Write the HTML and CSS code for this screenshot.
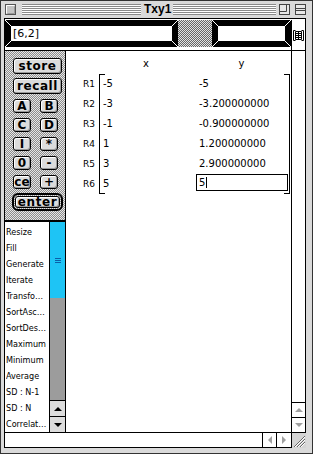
FILE: index.html
```html
<!DOCTYPE html>
<html lang="en">

<head>
  <meta charset="UTF-8">
  <title>Txy1</title>
  <link rel="stylesheet" href="styles.css">
</head>

<body>
  <div class="window">
    <div class="titlebar">
      <svg class="tbox" width="11" height="11" viewBox="0 0 11 11">
        <rect x="0.5" y="0.5" width="10" height="10" fill="#c4c4c4" stroke="#555" />
        <path d="M1.5 9.5V1.5H9.5" fill="none" stroke="#fff" />
        <path d="M2.5 9.5H9.5V2.5" fill="none" stroke="#999" />
      </svg>
      <span class="stripes left"></span>
      <span class="title">Txy1</span>
      <span class="stripes"></span>
      <svg class="tbox zoom" width="11" height="11" viewBox="0 0 11 11">
        <rect x="0.5" y="0.5" width="10" height="10" fill="#e8e8e8" stroke="#444" />
        <path d="M0.5 7.5H7.5V0.5" fill="none" stroke="#444" />
      </svg>
      <svg class="tbox" width="11" height="11" viewBox="0 0 11 11">
        <rect x="0.5" y="0.5" width="10" height="10" fill="#e8e8e8" stroke="#444" />
        <path d="M0.5 4.5H10.5M0.5 6.5H10.5" fill="none" stroke="#444" />
      </svg>
    </div>

    <div class="content">
      <div class="entry">
        <div class="field wide">
          <div class="well">[6,2]</div>
        </div>
        <div class="dots"></div>
        <div class="field short">
          <div class="well"></div>
        </div>
        <div class="icon-cell">
          <svg width="11" height="11" viewBox="0 0 11 11">
            <path d="M2.5 0.5H0.5V10.5H2.5M8.5 0.5H10.5V10.5H8.5" fill="none" stroke="#000" />
            <path d="M2.5 1.5H8.5V9.5H2.5ZM2.5 3.5H8.5M2.5 5.5H8.5M2.5 7.5H8.5M5.5 1.5V9.5" fill="none" stroke="#000" />
          </svg>
        </div>
      </div>

      <div class="middle">
        <div class="side">
          <div class="keys">
            <button class="key long">store</button>
            <button class="key long recall">recall</button>
            <div class="pair first">
              <button class="key">A</button>
              <button class="key">B</button>
            </div>
            <div class="pair">
              <button class="key">C</button>
              <button class="key">D</button>
            </div>
            <div class="pair">
              <button class="key">I</button>
              <button class="key">*</button>
            </div>
            <div class="pair">
              <button class="key">0</button>
              <button class="key">-</button>
            </div>
            <div class="pair">
              <button class="key">ce</button>
              <button class="key">+</button>
            </div>
            <div class="enter-ring">
              <button class="key long">enter</button>
            </div>
          </div>

          <div class="list">
            <ul class="items">
              <li>Resize</li>
              <li>Fill</li>
              <li>Generate</li>
              <li>Iterate</li>
              <li>Transfo…</li>
              <li>SortAsc…</li>
              <li>SortDes…</li>
              <li>Maximum</li>
              <li>Minimum</li>
              <li>Average</li>
              <li>SD : N-1</li>
              <li>SD : N</li>
              <li>Correlat…</li>
            </ul>
            <div class="sbar">
              <div class="thumb"><span class="grip"></span></div>
              <div class="gutter"></div>
              <div class="arrow up dark"></div>
              <div class="arrow down dark"></div>
            </div>
          </div>
        </div>

        <div class="sheet">
          <div class="head">
            <span></span>
            <span>x</span>
            <span>y</span>
          </div>
          <div class="body">
            <div class="labels">
              <div>R1</div>
              <div>R2</div>
              <div>R3</div>
              <div>R4</div>
              <div>R5</div>
              <div>R6</div>
            </div>
            <div class="cells">
              <div class="cx">-5</div>
              <div class="cy">-5</div>
              <div class="cx">-3</div>
              <div class="cy">-3.200000000</div>
              <div class="cx">-1</div>
              <div class="cy">-0.900000000</div>
              <div class="cx">1</div>
              <div class="cy">1.200000000</div>
              <div class="cx">3</div>
              <div class="cy">2.900000000</div>
              <div class="cx">5</div>
              <div class="cy sel"><span class="edit">5<span class="caret"></span></span></div>
            </div>
          </div>
        </div>

        <div class="vscroll">
          <div class="arrow up"></div>
          <div class="arrow down"></div>
        </div>
      </div>

      <div class="hscroll">
        <div class="htrack"></div>
        <div class="arrow left"></div>
        <div class="arrow right"></div>
        <div class="grow">
          <svg width="13" height="14" viewBox="0 0 13 14">
            <path d="M2 14L13 3M5 14L13 6M8 14L13 9" stroke="#666" />
            <path d="M3 14L13 4M6 14L13 7M9 14L13 10" stroke="#fff" />
          </svg>
        </div>
      </div>
    </div>
  </div>
</body>

</html>
```

FILE: styles.css
```css
* {
  box-sizing: border-box;
}

html,
body {
  margin: 0;
  padding: 0;
}

body {
  width: 313px;
  height: 454px;
  background: #dadada;
  font-family: "DejaVu Sans", sans-serif;
  color: #000;
}

.window {
  width: 313px;
  height: 454px;
  border: 1px solid #333;
  background: #dadada;
  display: flex;
  flex-direction: column;
}

/* title bar */
.titlebar {
  height: 17px;
  flex: none;
  display: flex;
  align-items: center;
  padding: 0 6px 0 4px;
}

.tbox {
  display: block;
  flex: none;
}

.tbox.zoom {
  margin-right: 5px;
}

.stripes {
  flex: 1;
  height: 11px;
  margin-right: 3px;
  background: repeating-linear-gradient(#8a8a8a 0 1px, #fff 1px 2px);
}

.stripes.left {
  flex: none;
  width: 119px;
  margin: 0 0 0 6px;
}

.title {
  margin: 0 2px 0 3px;
  font: bold 12px "Liberation Sans", sans-serif;
  line-height: 17px;
}

/* content */
.content {
  flex: 1;
  min-height: 0;
  margin: 0 6px 5px 3px;
  border: 1px solid #000;
  background: #fff;
  display: flex;
  flex-direction: column;
}

.entry {
  height: 32px;
  flex: none;
  display: flex;
  padding-top: 1px;
  border-bottom: 1px solid #000;
}

.field {
  height: 27px;
  padding: 6px;
  background:
    linear-gradient(45deg, transparent 44%, #fff 44% 56%, transparent 56%) left top / 6px 6px no-repeat,
    linear-gradient(-45deg, transparent 44%, #fff 44% 56%, transparent 56%) right top / 6px 6px no-repeat,
    linear-gradient(-45deg, transparent 44%, #fff 44% 56%, transparent 56%) left bottom / 6px 6px no-repeat,
    linear-gradient(45deg, transparent 44%, #fff 44% 56%, transparent 56%) right bottom / 6px 6px no-repeat,
    #000;
}

.field.wide {
  width: 173px;
}

.field.short {
  width: 79px;
}

.well {
  height: 100%;
  background: #fff;
  padding-left: 2px;
  font-size: 11px;
  line-height: 15px;
}

.dots {
  width: 34px;
  height: 27px;
  background: repeating-conic-gradient(#666 0 25%, #e2e2e2 0 50%) 0 0 / 2px 2px;
}

.icon-cell {
  width: 14px;
  border-left: 1px solid #000;
  display: flex;
  align-items: center;
  justify-content: center;
}

.icon-cell svg {
  display: block;
}

.middle {
  flex: 1;
  min-height: 0;
  display: flex;
}

/* left column */
.side {
  width: 61px;
  flex: none;
  border-right: 1px solid #000;
  display: flex;
  flex-direction: column;
}

.keys {
  height: 171px;
  flex: none;
  padding: 7px 0 0 8px;
  border-bottom: 2px solid #000;
  background: repeating-conic-gradient(#8c8c8c 0 25%, #e6e6e6 0 50%) 0 0 / 2px 2px;
  display: flex;
  flex-direction: column;
}

.key {
  margin: 0;
  padding: 0;
  width: 18px;
  height: 14px;
  border: 1px solid #000;
  border-radius: 3px;
  background: #dcdcdc;
  box-shadow: inset 1px 1px 0 #fff, inset -1px -1px 0 #9a9a9a;
  font: bold 12px "DejaVu Sans", sans-serif;
  line-height: 1;
  color: #000;
  display: flex;
  align-items: center;
  justify-content: center;
}

.key.long {
  width: 49px;
  height: 16px;
  letter-spacing: 0.6px;
}

.key.recall {
  margin-top: 4px;
}

.pair {
  display: flex;
  gap: 9px;
  margin-top: 5px;
}

.enter-ring {
  width: 51px;
  height: 18px;
  margin: 4px 0 0 -1px;
  padding: 1px;
  border: 2px solid #000;
  border-radius: 6px;
}

.enter-ring .key {
  width: 100%;
  height: 100%;
}

.list {
  flex: 1;
  min-height: 0;
  display: flex;
}

.items {
  width: 44px;
  margin: 0;
  padding: 2px 0 0 1px;
  list-style: none;
  font-family: "DejaVu Sans Condensed", "DejaVu Sans", sans-serif;
  font-size: 9px;
}

.items li {
  height: 16px;
  line-height: 16px;
  white-space: nowrap;
  overflow: hidden;
}

.sbar {
  width: 16px;
  border-left: 1px solid #000;
  display: flex;
  flex-direction: column;
}

.thumb {
  height: 76px;
  flex: none;
  background: #1ec4f5;
  display: flex;
  align-items: center;
  justify-content: center;
}

.grip {
  width: 6px;
  height: 5px;
  background: repeating-linear-gradient(#0b5fa8 0 1px, transparent 1px 2px);
}

.gutter {
  flex: 1;
  background: #9c9c9c;
}

/* scroll arrows */
.arrow {
  flex: none;
  display: flex;
  align-items: center;
  justify-content: center;
  background: #fff;
}

.arrow::before {
  content: "";
  width: 0;
  height: 0;
  border: 4px solid transparent;
}

.arrow.up::before {
  border-top: 0;
  border-bottom-color: #a0a0a0;
}

.arrow.down::before {
  border-bottom: 0;
  border-top-color: #a0a0a0;
}

.arrow.left::before {
  border-left: 0;
  border-right-color: #a0a0a0;
}

.arrow.right::before {
  border-right: 0;
  border-left-color: #a0a0a0;
}

.sbar .arrow {
  height: 16px;
  border-top: 1px solid #000;
  background: #dcdcdc;
}

.arrow.dark.up::before {
  border-bottom-color: #000;
}

.arrow.dark.down::before {
  border-top-color: #000;
}

/* matrix */
.sheet {
  flex: 1;
  padding-top: 3px;
  font-size: 10px;
}

.head {
  height: 20px;
  line-height: 20px;
  display: grid;
  grid-template-columns: 33px 94px 97px;
  text-align: center;
}

.body {
  display: flex;
}

.labels {
  width: 33px;
  padding-right: 4px;
  text-align: right;
  font-size: 9px;
}

.labels div {
  height: 20px;
  line-height: 20px;
}

.cells {
  width: 191px;
  position: relative;
  display: grid;
  grid-template-columns: 94px 97px;
  grid-auto-rows: 20px;
  line-height: 20px;
}

.cells::before,
.cells::after {
  content: "";
  position: absolute;
  top: 0;
  bottom: 0;
  width: 5px;
  border: 1px solid #000;
}

.cells::before {
  left: 0;
  border-right: 0;
}

.cells::after {
  right: 0;
  border-left: 0;
}

.cx {
  padding-left: 4px;
}

.cy {
  padding-left: 6px;
}

.cy.sel {
  padding-left: 3px;
}

.edit {
  display: flex;
  align-items: center;
  width: 92px;
  height: 17px;
  padding-left: 2px;
  border: 1px solid #000;
  line-height: 15px;
}

.caret {
  width: 1px;
  height: 11px;
  margin-left: 1px;
  background: #000;
}

.vscroll {
  width: 14px;
  flex: none;
  border-left: 1px solid #000;
  display: flex;
  flex-direction: column;
  justify-content: flex-end;
}

.vscroll .arrow {
  height: 15px;
  border-top: 1px solid #000;
}

.hscroll {
  height: 15px;
  flex: none;
  border-top: 1px solid #000;
  display: flex;
}

.htrack {
  flex: 1;
}

.hscroll .arrow {
  border-left: 1px solid #000;
}

.arrow.left {
  width: 14px;
}

.arrow.right {
  width: 15px;
}

.grow {
  width: 15px;
  margin: 0 -1px -1px 0;
  border-left: 1px solid #000;
  background: #d4d4d4;
}

.grow svg {
  display: block;
}
```
